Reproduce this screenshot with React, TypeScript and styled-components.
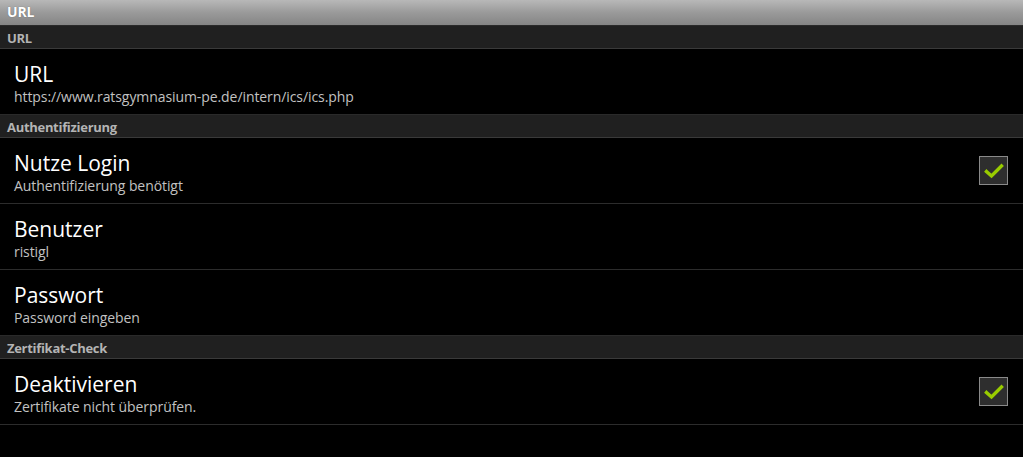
import React from "react";
import styled, { createGlobalStyle } from "styled-components";

const GlobalStyle = createGlobalStyle`
  html, body {
    margin: 0;
    padding: 0;
    background: #000;
  }
  body {
    font-family: "Open Sans", "Noto Sans", sans-serif;
    -webkit-font-smoothing: antialiased;
  }
`;

type Pref = {
  title: string;
  summary: string;
  checked?: boolean;
};

type Group = {
  name: string;
  items: Pref[];
  lastBorder?: boolean;
};

const groups: Group[] = [
  {
    name: "URL",
    items: [
      { title: "URL", summary: "https://www.ratsgymnasium-pe.de/intern/ics/ics.php" },
    ],
  },
  {
    name: "Authentifizierung",
    items: [
      { title: "Nutze Login", summary: "Authentifizierung benötigt", checked: true },
      { title: "Benutzer", summary: "ristigl" },
      { title: "Passwort", summary: "Password eingeben" },
    ],
  },
  {
    name: "Zertifikat-Check",
    lastBorder: true,
    items: [
      { title: "Deaktivieren", summary: "Zertifikate nicht überprüfen.", checked: true },
    ],
  },
];

const CheckBox = () => (
  <StyledCheck>
    <svg width="20" height="16" viewBox="0 0 20 16">
      <path
        d="M2.5 8.5 L7.5 13 L17.5 3"
        fill="none"
        stroke="#99cc00"
        strokeWidth="3.4"
        strokeLinecap="square"
        strokeLinejoin="miter"
      />
    </svg>
  </StyledCheck>
);

const App = () => {
  return (
    <Screen>
      <GlobalStyle />
      <TitleBar>URL</TitleBar>
      {groups.map((g) => (
        <section key={g.name}>
          <SectionHeader>{g.name}</SectionHeader>
          {g.items.map((p, i) => (
            <Row key={p.title} $border={i < g.items.length - 1 || !!g.lastBorder}>
              <TextBlock>
                <Title>{p.title}</Title>
                <Summary>{p.summary}</Summary>
              </TextBlock>
              {p.checked && <CheckBox />}
            </Row>
          ))}
        </section>
      ))}
    </Screen>
  );
};

export default App;

const Screen = styled.div`
  width: 1023px;
  height: 457px;
  background: #000;
  overflow: hidden;
  display: flex;
  flex-direction: column;
`;

const TitleBar = styled.div`
  height: 25px;
  box-sizing: border-box;
  padding: 2px 7px 0;
  background: linear-gradient(to bottom, #b8b8b8 0%, #9a9a9a 50%, #858585 100%);
  color: #fff;
  font-weight: 700;
  font-size: 14px;
  line-height: 19px;
  letter-spacing: -0.2px;
  text-shadow: 0 0 1px rgba(0, 0, 0, 0.4);
`;

const SectionHeader = styled.div`
  height: 24px;
  box-sizing: border-box;
  padding: 3px 7px 0;
  background: #202020;
  border-top: 1px solid #2a2a2a;
  border-bottom: 1px solid #3a3a3a;
  color: #b4b4b4;
  font-weight: 700;
  font-size: 13px;
  line-height: 18px;
  letter-spacing: -0.3px;
`;

const Row = styled.div<{ $border: boolean }>`
  height: ${(p) => (p.$border ? "66px" : "65px")};
  box-sizing: border-box;
  display: flex;
  align-items: center;
  justify-content: space-between;
  padding: 0 15px 0 14px;
  border-bottom: ${(p) => (p.$border ? "1px solid #2c2c2c" : "none")};
`;

const TextBlock = styled.div`
  display: flex;
  flex-direction: column;
  padding-top: 4px;
`;

const Title = styled.div`
  color: #fff;
  font-size: 21px;
  line-height: 26px;
`;

const Summary = styled.div`
  color: #c2c2c2;
  font-size: 14px;
  line-height: 19px;
  letter-spacing: -0.08px;
`;

const StyledCheck = styled.div`
  width: 29px;
  height: 29px;
  box-sizing: border-box;
  border: 1px solid #8a8a8a;
  background: #2e2e2e;
  display: flex;
  align-items: center;
  justify-content: center;
`;
